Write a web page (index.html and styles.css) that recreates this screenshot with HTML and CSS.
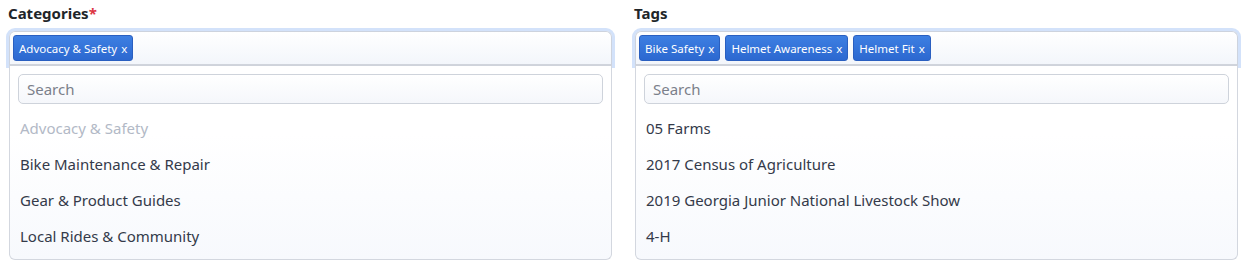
FILE: index.html
```html
<!DOCTYPE html>
<html lang="en">
<head>
    <meta charset="UTF-8">
    <title>Categories and Tags</title>
    <link rel="stylesheet" href="styles.css">
</head>
<body>
    <div class="fields">
        <div class="field">
            <label class="field-label">Categories<span class="required">*</span></label>
            <div class="select-box">
                <span class="chip">Advocacy &amp; Safety<span class="chip-x">x</span></span>
            </div>
            <div class="dropdown">
                <input class="search" type="text" placeholder="Search">
                <ul class="options">
                    <li class="option disabled">Advocacy &amp; Safety</li>
                    <li class="option">Bike Maintenance &amp; Repair</li>
                    <li class="option">Gear &amp; Product Guides</li>
                    <li class="option">Local Rides &amp; Community</li>
                </ul>
            </div>
        </div>
        <div class="field">
            <label class="field-label">Tags</label>
            <div class="select-box">
                <span class="chip">Bike Safety<span class="chip-x">x</span></span>
                <span class="chip">Helmet Awareness<span class="chip-x">x</span></span>
                <span class="chip">Helmet Fit<span class="chip-x">x</span></span>
            </div>
            <div class="dropdown">
                <input class="search" type="text" placeholder="Search">
                <ul class="options">
                    <li class="option">05 Farms</li>
                    <li class="option">2017 Census of Agriculture</li>
                    <li class="option">2019 Georgia Junior National Livestock Show</li>
                    <li class="option">4-H</li>
                </ul>
            </div>
        </div>
    </div>
</body>
</html>
```

FILE: styles.css
```css
body {
    margin: 0;
    padding: 4px 8px 0 8px;
    background: #fff;
    font-family: "Noto Sans", "Open Sans", sans-serif;
    color: #343a44;
}

.fields {
    display: grid;
    grid-template-columns: 1fr 1fr;
    gap: 21px;
}

.field {
    display: flex;
    flex-direction: column;
}

.field-label {
    font-size: 15px;
    font-weight: bold;
    color: #212529;
    line-height: 18px;
    margin-bottom: 9px;
}

.required {
    color: #dc3545;
}

.select-box {
    display: flex;
    gap: 5px;
    align-items: center;
    height: 26px;
    padding: 3px 3px;
    border: 1px solid #cdd3de;
    border-bottom-color: #d0d4dc;
    border-radius: 6px 6px 0 0;
    background: linear-gradient(180deg, #ffffff, #f3f6fb);
    box-shadow: 0 0 0 3px #d3e2fa;
    margin: 0 1px;
}

.chip {
    display: inline-flex;
    align-items: center;
    height: 24px;
    padding: 0 5px;
    border: 1px solid #2a5fc0;
    border-radius: 3px;
    background: linear-gradient(180deg, #3d7fe2, #2c68d0);
    color: #fff;
    font-size: 11.5px;
    white-space: nowrap;
}

.chip-x {
    margin-left: 4px;
}

.dropdown {
    position: relative;
    z-index: 1;
    margin: 0 1px;
    padding: 8px 8px 4px 8px;
    border: 1px solid #d3d7df;
    border-top-color: #cfd3db;
    border-radius: 0 0 6px 6px;
    background: linear-gradient(180deg, #ffffff 0%, #ffffff 35%, #f7f9fd 100%);
}

.search {
    display: block;
    box-sizing: border-box;
    width: 100%;
    height: 30px;
    padding: 0 8px;
    border: 1px solid #ced3db;
    border-radius: 5px;
    background: linear-gradient(180deg, #ffffff, #f5f7fb);
    font-family: inherit;
    font-size: 15px;
    color: #343a44;
    outline: none;
}

.search::placeholder {
    color: #7b808a;
}

.options {
    list-style: none;
    margin: 7px 0 0 0;
    padding: 0;
}

.option {
    height: 36px;
    line-height: 34px;
    padding-left: 2px;
    font-size: 15px;
    color: #343a4a;
}

.option.disabled {
    color: #b2b9c6;
}
```
